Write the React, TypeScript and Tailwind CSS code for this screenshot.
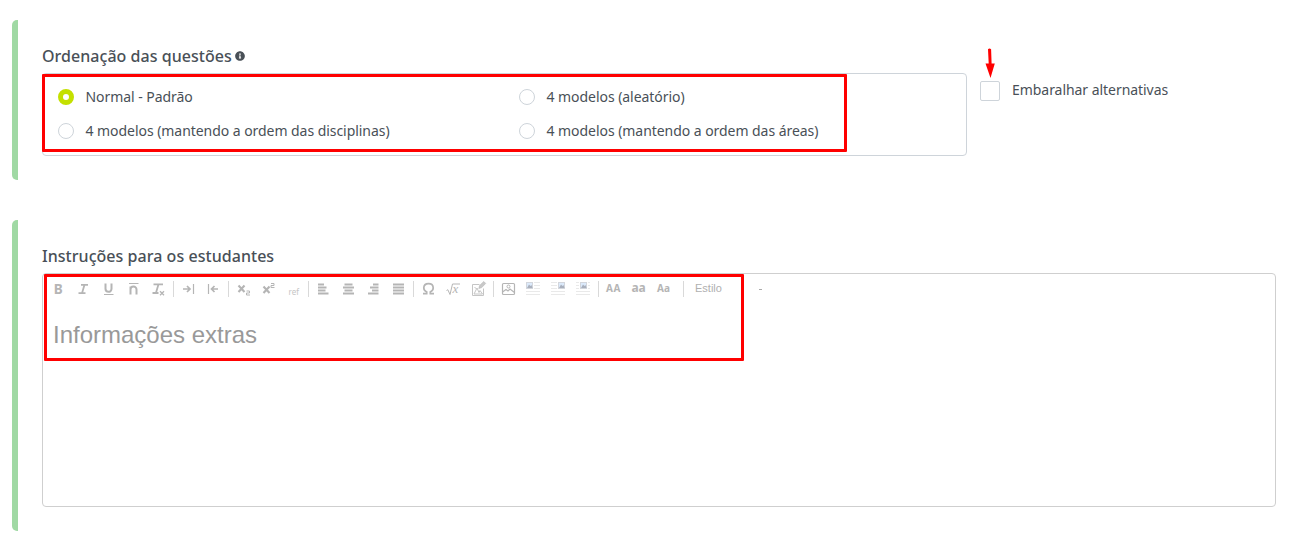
import React, { useState } from 'react';
import { FaInfoCircle } from 'react-icons/fa';

type IconProps = {
  children: React.ReactNode;
}

type SectionProps = {
  title: string;
  info?: boolean;
  className: string;
  children: React.ReactNode;
}

const orders = [
  "Normal - Padrão",
  "4 modelos (aleatório)",
  "4 modelos (mantendo a ordem das disciplinas)",
  "4 modelos (mantendo a ordem das áreas)",
];

const Icon = ({ children }: IconProps) => (
  <button className="h-5 w-[25px] shrink-0 text-[#b5b5b5]">
    <svg width="25" height="20" viewBox="0 0 25 20" fill="none" stroke="currentColor" className="block">{children}</svg>
  </button>
);

const Separator = () => (
  <span className="h-4 w-[5px] shrink-0 pl-0.5"><span className="block h-full w-px bg-[#d9d9d9]" /></span>
);

// letters used as toolbar icons
const Glyph = ({ x, y, size, className = "font-bold", children }: { x: number; y: number; size: number; className?: string; children: string }) => (
  <text x={x} y={y} fontSize={size} fill="currentColor" stroke="none" className={`font-['Noto_Sans',sans-serif] ${className}`}>{children}</text>
);

const Wrapped = ({ x }: { x: number }) => (
  <>
    <path d="M5 3.5h14M5 6.5h14M5 9.5h14M5 12.5h14M5 15.5h14" stroke="#e9e9e9" />
    <rect x={x - 1} y="2" width="9" height="9" fill="#fff" stroke="none" />
    <rect x={x + 0.5} y="3.5" width="6" height="6" fill="#dceafb" stroke="#d3d6dc" />
    <path d={`M${x + 1} 9l2-3.500 1.500 1.500 1-1 1 3z`} fill="#a9b0bd" stroke="none" />
  </>
);

const Toolbar = () => (
  <div className="flex h-[30px] items-center pl-[3px]">
    <Icon><Glyph x={7.8} y={15} size={13.5}>B</Glyph></Icon>
    <Icon><path d="M10 5.8h7M7.5 14.200h7M13.500 5.800l-2.500 8.400" strokeWidth="1.8" /></Icon>
    <Icon><path d="M9.5 4.500v5.300a3 3 0 0 0 6 0V4.500" strokeWidth="2" /><path d="M8 15.500h9.500" /></Icon>
    <Icon><path d="M9.500 15.500V7.500M9.500 10.500a3 3 0 0 1 6 0v5" strokeWidth="2" /><path d="M8 4.500h9.500" /></Icon>
    <Icon><path d="M7.500 5.300h9.500M12.500 5.300l-2.500 8.400M6.500 14h6" strokeWidth="1.8" /><path d="M14 12.300l4 4M18 12.300l-4 4" strokeWidth="1.300" /></Icon>
    <Separator />
    <Icon><path d="M7 10h7M11 7l3 3-3 3" strokeWidth="1.7" /><path d="M17.500 5v10" strokeWidth="1.2" /></Icon>
    <Icon><path d="M10.500 10h6.500M13.500 7l-3 3 3 3" strokeWidth="1.7" /><path d="M7.500 5v10" strokeWidth="1.2" /></Icon>
    <Separator />
    <Icon><path d="M7.500 6.500l6 6.500M13.500 6.500l-6 6.500" strokeWidth="2.1" /><path d="M15.500 12h3v2h-3v2h3.500" /></Icon>
    <Icon><path d="M7.500 7.500l6 6.500M13.500 7.500l-6 6.500" strokeWidth="2.1" /><path d="M15 4.500h3v2h-3v2h3.500" /></Icon>
    <Icon><Glyph x={7.5} y={16} size={8} className="font-normal text-[#c5c5c5]">ref</Glyph></Icon>
    <Separator />
    <Icon><path d="M7 5.500h6M7 8.500h8.500M7 11.500h7.500M7 14.500h10.500" strokeWidth="1.8" /></Icon>
    <Icon><path d="M8.500 5.500h8M7 8.500h11M8.500 11.500h8M7 14.500h11" strokeWidth="1.8" /></Icon>
    <Icon><path d="M12 5.500h5.500M9 8.500h8.500M11 11.500h6.500M7 14.500h10.500" strokeWidth="1.8" /></Icon>
    <Icon><path d="M7 5.500h11M7 8.500h11M7 11.500h11M7 14.500h11" strokeWidth="1.8" /></Icon>
    <Separator />
    <Icon><path d="M7 14.700h3.700v-1.800C8.800 12 7.800 10.600 7.800 9c0-2.500 1.900-4.300 4.700-4.300S17.200 6.500 17.200 9c0 1.600-1 3-2.900 3.900v1.800H18" strokeWidth="1.700" /></Icon>
    <Icon>
      <path d="M5.500 11.500l1.300-.8 2.200 4.800L11.500 5H19" />
      <text x="11.500" y="14" fontSize="13" fill="currentColor" stroke="none" className="font-['Liberation_Serif',serif] italic">x</text>
    </Icon>
    <Icon>
      <path d="M13.500 5.500h-7v11h11v-7" stroke="#c5c5c5" />
      <path d="M8 15l3-6 2 4.500 1-2 2.500 3.500zM8.500 8l2 2" stroke="#c5c5c5" />
      <path d="M12.800 9.500l.8-3 4.200-4 1.900 1.900-4 4.200z" fill="#c9c9c9" strokeWidth="0.6" />
    </Icon>
    <Separator />
    <Icon>
      <rect x="6.500" y="4.500" width="12" height="11" rx="1" strokeWidth="1.2" />
      <path d="M6.500 13l3.500-2.500 2 1.500 2-2 4.500 3.500" strokeWidth="1.200" />
      <circle cx="12.500" cy="7.500" r="1.500" />
    </Icon>
    <Icon><Wrapped x={5} /></Icon>
    <Icon><Wrapped x={12} /></Icon>
    <Icon><Wrapped x={9} /></Icon>
    <Separator />
    <Icon><Glyph x={5} y={13} size={10}>A</Glyph><Glyph x={12.5} y={13} size={10}>A</Glyph></Icon>
    <Icon><Glyph x={5.5} y={13} size={12}>a</Glyph><Glyph x={12.5} y={13} size={12}>a</Glyph></Icon>
    <Icon><Glyph x={6} y={13} size={10}>A</Glyph><Glyph x={13} y={13} size={10}>a</Glyph></Icon>
    <span className="ml-[7px] h-4 w-px bg-[#d9d9d9]" />
    <button className="ml-[11px] -mt-0.5 flex w-[67px] items-center justify-between font-['Liberation_Sans',sans-serif] text-[11px] leading-4 text-[#b0b0b0]">
      <span>Estilo</span>
      <span className="mt-0.5 h-px w-[3px] bg-[#aaa]" />
    </button>
  </div>
);

const Section = ({ title, info, className, children }: SectionProps) => (
  <section className={`flex ${className}`}>
    <div className="w-1.5 shrink-0 rounded-l-[5px] bg-[#a0d9a4]" />
    <div className="flex-1 pt-6 pl-6">
      <h2 className="flex h-[29px] items-start text-base leading-6 font-medium tracking-[0.04px] text-[#495057]">
        {title}
        {info && <FaInfoCircle size={10} className="mt-[7px] ml-[3px]" />}
      </h2>
      {children}
    </div>
  </section>
);

const App = () => {
  const [order, setOrder] = useState(0);
  const [shuffle, setShuffle] = useState(false);

  return (
    <main className="flex h-[544px] w-[1302px] flex-col gap-10 overflow-hidden bg-white pt-5 pr-[26px] pl-3 font-['Noto_Sans',sans-serif] text-sm text-[#495057]">
      <Section title="Ordenação das questões" info className="h-40">
        <div className="flex">
          <div className="relative h-[83px] w-[925px] rounded border border-[#ced4da] pt-[6px] pl-[15px]">
            <div className="grid grid-cols-[461px_1fr]">
              {orders.map((label, i) => (
                <label key={label} className="flex h-[34px] items-center">
                  <input type="radio" name="order" className="sr-only" checked={order === i} onChange={() => setOrder(i)} />
                  <span className={order === i ? "h-4 w-4 rounded-full border-[5px] border-[#c4e000]" : "h-4 w-4 rounded-full border border-[#ced4da]"} />
                  <span className="ml-[11.5px] leading-5 tracking-[-0.05px]">{label}</span>
                </label>
              ))}
            </div>
            <div className="absolute top-0 -left-px h-[78px] w-[805px] rounded-[1px] border-3 border-[#ff0000]" />
          </div>
          <label className="relative mt-2 ml-[13px] flex h-5 items-center">
            <input type="checkbox" className="sr-only" checked={shuffle} onChange={() => setShuffle(!shuffle)} />
            <span className="h-5 w-5 rounded-[2px] border border-[#ced4da]" />
            <span className="-mt-0.5 ml-3 leading-5 tracking-[-0.05px]">Embaralhar alternativas</span>
            <svg width="10" height="30" viewBox="0 0 10 30" className="absolute -top-[33px] left-[5px]">
              <path d="M3 1.200Q4.500-.4 6.100 1.200L6.600 15.500H9.800L5.500 30 .5 15.500H3.700z" fill="#f00" />
            </svg>
          </label>
        </div>
      </Section>

      <Section title="Instruções para os estudantes" className="h-[311px]">
        <div className="relative h-[234px] rounded border border-[#cfcfcf]">
          <Toolbar />
          <p className="pt-[17px] pl-2.5 font-['Liberation_Sans',sans-serif] text-2xl leading-7 text-[#999]">Informações extras</p>
          <div className="absolute top-0 left-px h-[87px] w-[700px] rounded-[1px] border-3 border-[#ff0000]" />
        </div>
      </Section>
    </main>
  );
};

export default App;
